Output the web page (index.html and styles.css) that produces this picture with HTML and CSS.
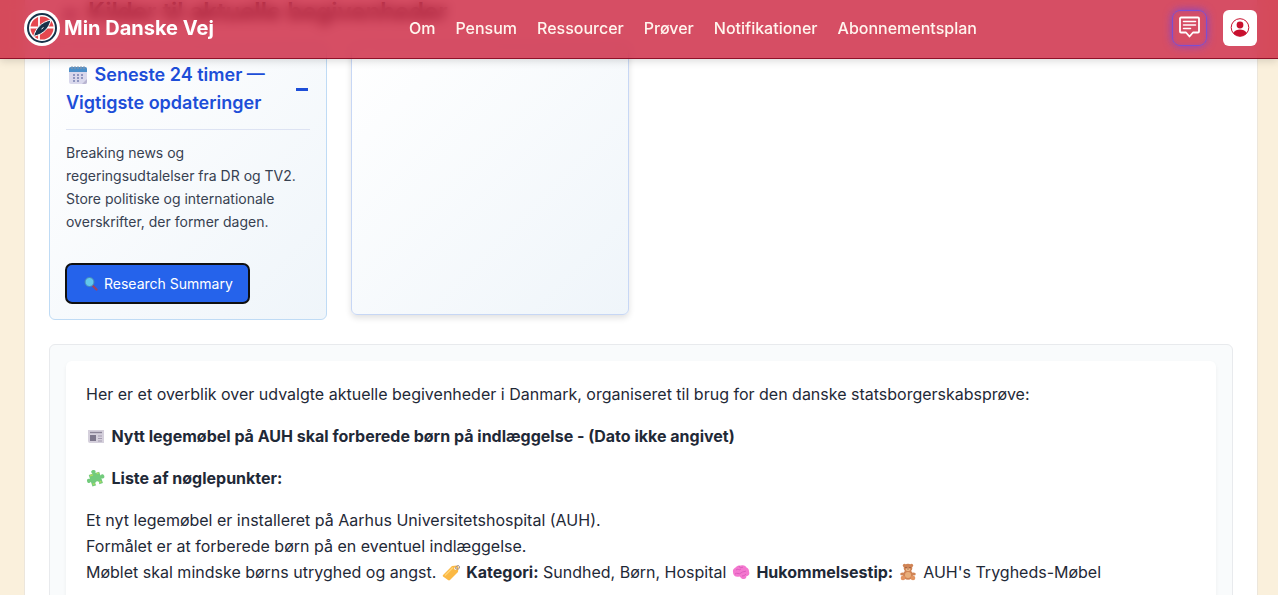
FILE: index.html
```
<!DOCTYPE html>
<html lang="da">
<head>
  <meta charset="UTF-8" />
  <meta name="viewport" content="width=device-width, initial-scale=1" />
  <title>Min Danske Vej</title>
  <link rel="stylesheet" href="styles.css">
</head>
<body>
  <header class="site-header">
    <a class="brand" href="#">
      <svg class="brand-logo" viewBox="0 0 36 36" aria-hidden="true">
        <circle cx="18" cy="18" r="18" fill="#fff"/>
        <circle cx="18" cy="18" r="14" fill="#fff" stroke="#17324a" stroke-width="2"/>
        <circle cx="18" cy="18" r="11.500" fill="#e5484f"/>
        <path d="M15 6v24M6 17.500h24" stroke="#fff" stroke-width="1.800"/>
        <path d="M27 10C25 18 20 24 9.500 26.500C12 18 17 12 27 10Z" fill="#17324a" stroke="#fff" stroke-width="1"/>
        <path d="M17.500 19l2-1.500" stroke="#fff" stroke-width="1"/>
      </svg>
      <span>Min Danske Vej</span>
    </a>
    <nav class="main-nav">
      <a href="#">Om</a>
      <a href="#">Pensum</a>
      <a href="#">Ressourcer</a>
      <a href="#">Prøver</a>
      <a href="#">Notifikationer</a>
      <a href="#">Abonnementsplan</a>
    </nav>
    <div class="header-actions">
      <button class="icon-btn chat-btn" type="button" aria-label="Chat">
        <svg width="24" height="24" viewBox="0 0 24 24" fill="none" stroke="#fff" stroke-width="1.8" stroke-linejoin="round" stroke-linecap="round" aria-hidden="true">
          <path d="M3 1.500h17a1 1 0 0 1 1 1v13a1 1 0 0 1-1 1h-5l-3.500 4-3.500-4h-5a1 1 0 0 1-1-1v-13a1 1 0 0 1 1-1z"/>
          <path d="M5.500 5.500h12M5.500 9h12M5.500 12.500h7" stroke-width="1.500"/>
        </svg>
      </button>
      <button class="icon-btn user-btn" type="button" aria-label="Profil">
        <svg width="20" height="20" viewBox="0 0 20 20" aria-hidden="true">
          <circle cx="10" cy="9.500" r="8.800" fill="#fff" stroke="#c8102e" stroke-width="1"/>
          <circle cx="10" cy="7" r="3.400" fill="#c8102e"/>
          <path d="M3.200 15c1.800-2.600 4.100-3.500 6.800-3.500s5 .9 6.800 3.500a8.800 8.800 0 0 1-13.600 0z" fill="#c8102e"/>
        </svg>
      </button>
    </div>
  </header>

  <main class="page">
    <h2 class="section-title">
      <svg class="emoji" viewBox="0 0 20 20" aria-hidden="true"><use href="#newspaper"/></svg>
      Kilder til aktuelle begivenheder
    </h2>

    <div class="card-grid">
      <section class="card">
        <div class="card-head">
          <h3>
            <svg class="emoji" viewBox="0 0 20 20" aria-hidden="true">
              <rect x="1" y="2" width="18" height="17" rx="2" fill="#d9d8ec"/>
              <path d="M1 7V4a2 2 0 0 1 2-2h14a2 2 0 0 1 2 2v3z" fill="#4b8fc9"/>
              <path d="M4 1v3M7 1v3M10 1v3M13 1v3M16 1v3" stroke="#8d98ac" stroke-width="1"/>
              <path d="M5 10h2M9 10h2M13 10h2M5 13h2M9 13h2M13 13h2M5 16h2M9 16h2" stroke="#7780b0" stroke-width="1.700"/>
              <path d="M14 19l5-5v3a2 2 0 0 1-2 2z" fill="#b9b5d1"/>
            </svg>
            Seneste 24 timer — Vigtigste opdateringer
          </h3>
          <button class="toggle" type="button" aria-label="Fold sammen" aria-expanded="true"><span></span></button>
        </div>
        <p class="card-text">Breaking news og regeringsudtalelser fra DR og TV2. Store politiske og internationale overskrifter, der former dagen.</p>
        <button class="research-btn" type="button">
          <svg width="16" height="16" viewBox="0 0 16 16" aria-hidden="true">
            <path d="M11 10l3.500 3.500" stroke="#9c4468" stroke-width="2.400" stroke-linecap="round"/>
            <circle cx="7.500" cy="6" r="4.500" fill="#62c8ed" stroke="#4587b8" stroke-width="1"/>
          </svg>
          Research Summary
        </button>
      </section>
      <section class="card card-raised"></section>
    </div>

    <section class="result">
      <div class="result-body">
        <p>Her er et overblik over udvalgte aktuelle begivenheder i Danmark, organiseret til brug for den danske statsborgerskabsprøve:</p>
        <p>
          <svg class="emoji" viewBox="0 0 20 20" aria-hidden="true">
            <g id="newspaper">
              <path d="M2 4h16v13H4a2 2 0 0 1-2-2z" fill="#d5d0dc"/>
              <path d="M4 6.500h12" stroke="#8b8497" stroke-width="1.400"/>
              <rect x="4" y="9" width="6" height="6" fill="#7d778c"/>
              <path d="M12 10h4M12 12.500h4M12 15h4" stroke="#a49cb0" stroke-width="1"/>
            </g>
          </svg>
          <strong>Nytt legemøbel på AUH skal forberede børn på indlæggelse - (Dato ikke angivet)</strong>
        </p>
        <p>
          <svg class="emoji" viewBox="0 0 20 20" aria-hidden="true">
            <g transform="rotate(-18 10 10)">
              <path d="M4 5h4c-1.500-2-.5-3.500 1.500-3.500s3 1.500 1.500 3.500h4v4c2-1.500 3.500-.5 3.500 1.500s-1.500 3-3.500 1.500v5h-4c1.500-2 0-3.500-1.500-3.500s-2.500 1.500-1.500 3.500h-4v-5c-2 1.500-3.500.5-3.500-1.500s1.500-3 3.500-1.500z" fill="#72cb7c"/>
              <path d="M5 6h3M12 6h2M5 15h2M12 15h2" stroke="#b4dc5c" stroke-width="1.400"/>
            </g>
          </svg>
          <strong>Liste af nøglepunkter:</strong>
        </p>
        <p>
          Et nyt legemøbel er installeret på Aarhus Universitetshospital (AUH).<br>
          Formålet er at forberede børn på en eventuel indlæggelse.<br>
          Møblet skal mindske børns utryghed og angst.
          <svg class="emoji" viewBox="0 0 20 20" aria-hidden="true">
            <path d="M2 13l9-9 5-.5 1.500 1.500-.5 5-8 8a1.500 1.500 0 0 1-2 0l-5-3.500a1.200 1.200 0 0 1 0-1.500z" fill="#fbb944"/>
            <path d="M4 13.500l8-8" stroke="#ffd477" stroke-width="1.500"/>
            <circle cx="14.500" cy="6.500" r="1.300" fill="#fff"/>
            <path d="M14.500 6.500c0-3 4-4 4-1.500s-2 2.500-4 1.500" fill="none" stroke="#9c8e91" stroke-width="1"/>
          </svg>
          <strong>Kategori:</strong> Sundhed, Børn, Hospital
          <svg class="emoji" viewBox="0 0 20 20" aria-hidden="true">
            <path d="M2 10c-.5-3 2-4 3-5 2-2 4-1.500 5-1.500 3-1 5 1 5.500 2 2 .5 2.500 2.500 2.500 4 1 3-.5 4.500-2.500 4.500 0 2-1.500 3.500-3 3-2 .5-2.500-1.500-4-2.500-4 1-6.500-1-6.500-4.500z" fill="#f478cf"/>
            <path d="M5 8c2-2 3 1 5-1M8 4c0 2 3 2 4 1M4 12c2-2 4 1 6-1s4-1 5-2M11 14c2 0 3-1 4-2" stroke="#dc5cbd" stroke-width="1" fill="none"/>
          </svg>
          <strong>Hukommelsestip:</strong>
          <svg class="emoji" viewBox="0 0 20 20" aria-hidden="true">
            <g fill="#d08455">
              <circle cx="6.500" cy="3.500" r="1.700"/>
              <circle cx="13.500" cy="3.500" r="1.700"/>
              <circle cx="10" cy="6" r="4.300"/>
              <ellipse cx="10" cy="13" rx="5" ry="4.800"/>
              <ellipse cx="4.500" cy="12" rx="2.300" ry="1.600"/>
              <ellipse cx="15.500" cy="12" rx="2.300" ry="1.600"/>
            </g>
            <ellipse cx="10" cy="13" rx="3" ry="3" fill="#e9ae7a"/>
            <ellipse cx="10" cy="7.500" rx="2.200" ry="1.600" fill="#f0bd8b"/>
            <circle cx="5" cy="16" r="2.300" fill="#e39460"/>
            <circle cx="15" cy="16" r="2.300" fill="#e39460"/>
            <path d="M8 5v.8M12 5v.8M9.500 7h1" stroke="#633a32" stroke-width="1"/>
          </svg>
          AUH's Trygheds-Møbel
        </p>
      </div>
    </section>
  </main>
</body>
</html>
```
FILE: styles.css
```
* {
  margin: 0;
  padding: 0;
  box-sizing: border-box;
}

body {
  font-family: Inter, sans-serif;
  font-size: 16px;
  line-height: 26px;
  height: 100vh;
  overflow: hidden;
  background: #faf0dc;
  color: #1f2937;
}

button {
  font: inherit;
  cursor: pointer;
}

/* Header, fixed over the scrolled content */
.site-header {
  position: fixed;
  top: 0;
  left: 0;
  right: 0;
  z-index: 10;
  display: flex;
  justify-content: space-between;
  align-items: center;
  padding: 10px 21px 12px 24px;
  background: rgba(200, 16, 46, 0.74);
  border-bottom: 1px solid #8f1028;
  box-shadow: 0 2px 8px rgba(0, 0, 0, 0.15);
  backdrop-filter: blur(6px);
}

.brand {
  display: flex;
  align-items: center;
  gap: 4px;
  color: #fff;
  font-size: 20px;
  font-weight: 700;
  text-decoration: none;
}

.brand-logo {
  width: 36px;
  height: 36px;
}

.main-nav {
  display: flex;
  gap: 20px;
}

.main-nav a {
  color: #fff5ee;
  font-weight: 500;
  text-decoration: none;
}

.header-actions {
  display: flex;
  align-items: center;
  gap: 16px;
}

.icon-btn {
  display: flex;
  align-items: center;
  justify-content: center;
  width: 34px;
  height: 36px;
  border: none;
  border-radius: 6px;
}

.chat-btn {
  width: 35px;
  background: transparent;
  border: 1px solid #7c4fd0;
  border-radius: 8px;
  box-shadow: 0 0 8px rgba(110, 70, 230, 0.8), inset 0 0 4px rgba(110, 70, 230, 0.4);
}

.user-btn {
  background: #fff;
}

/* Page */
.page {
  min-height: 100vh;
  margin: 0 20px 0 24px;
  padding: 0 24px;
  background: #fff;
  border: 1px solid #ece6dc;
  border-top: none;
}

.section-title {
  padding: 0 12px;
  font-size: 24px;
  line-height: 24px;
  font-weight: 600;
  color: #1f2937;
}

.emoji {
  display: inline-block;
  width: 20px;
  height: 20px;
  margin-right: 1px;
  vertical-align: -4px;
}

.card-grid {
  display: grid;
  grid-template-columns: repeat(4, 1fr);
  gap: 24px;
  margin-top: 20px;
}

.card {
  padding: 16px;
  background: linear-gradient(135deg, #fff, #eff5fa);
  border: 1px solid #bfdbf5;
  border-radius: 6px;
}

.card-raised {
  margin-bottom: 5px;
  border-color: #c7d7f5;
  box-shadow: 0 3px 6px rgba(0, 0, 0, 0.12);
}

.card-head {
  display: flex;
  align-items: center;
  justify-content: space-between;
  padding-bottom: 12px;
  border-bottom: 1px solid #dde3f3;
}

.card-head h3 {
  font-size: 18px;
  line-height: 28px;
  font-weight: 600;
  color: #1d4ed8;
}

.card-head .emoji {
  margin: 0 2px;
}

.toggle {
  padding: 8px 2px;
  background: none;
  border: none;
}

.toggle span {
  display: block;
  width: 12px;
  height: 3px;
  background: #1d4ed8;
}

.card-text {
  margin: 11px 0 31px;
  font-size: 14px;
  line-height: 23px;
  color: #374151;
}

.research-btn {
  display: flex;
  align-items: center;
  gap: 6px;
  padding: 8px 16px;
  font-size: 14px;
  line-height: 23px;
  font-weight: 400;
  color: #fff;
  background: #2563eb;
  border: none;
  border-radius: 6px;
  outline: 2px solid #101010;
  outline-offset: -1px;
}

/* Research result */
.result {
  margin-top: 24px;
  padding: 16px;
  background: #f9fbfc;
  border: 1px solid #e8eaed;
  border-radius: 6px;
}

.result-body {
  padding: 20px;
  background: #fff;
  border-radius: 6px;
  box-shadow: 0 2px 4px rgba(0, 0, 0, 0.05);
}

.result-body p + p {
  margin-top: 16px;
}

.result-body strong {
  font-weight: 700;
}
```
